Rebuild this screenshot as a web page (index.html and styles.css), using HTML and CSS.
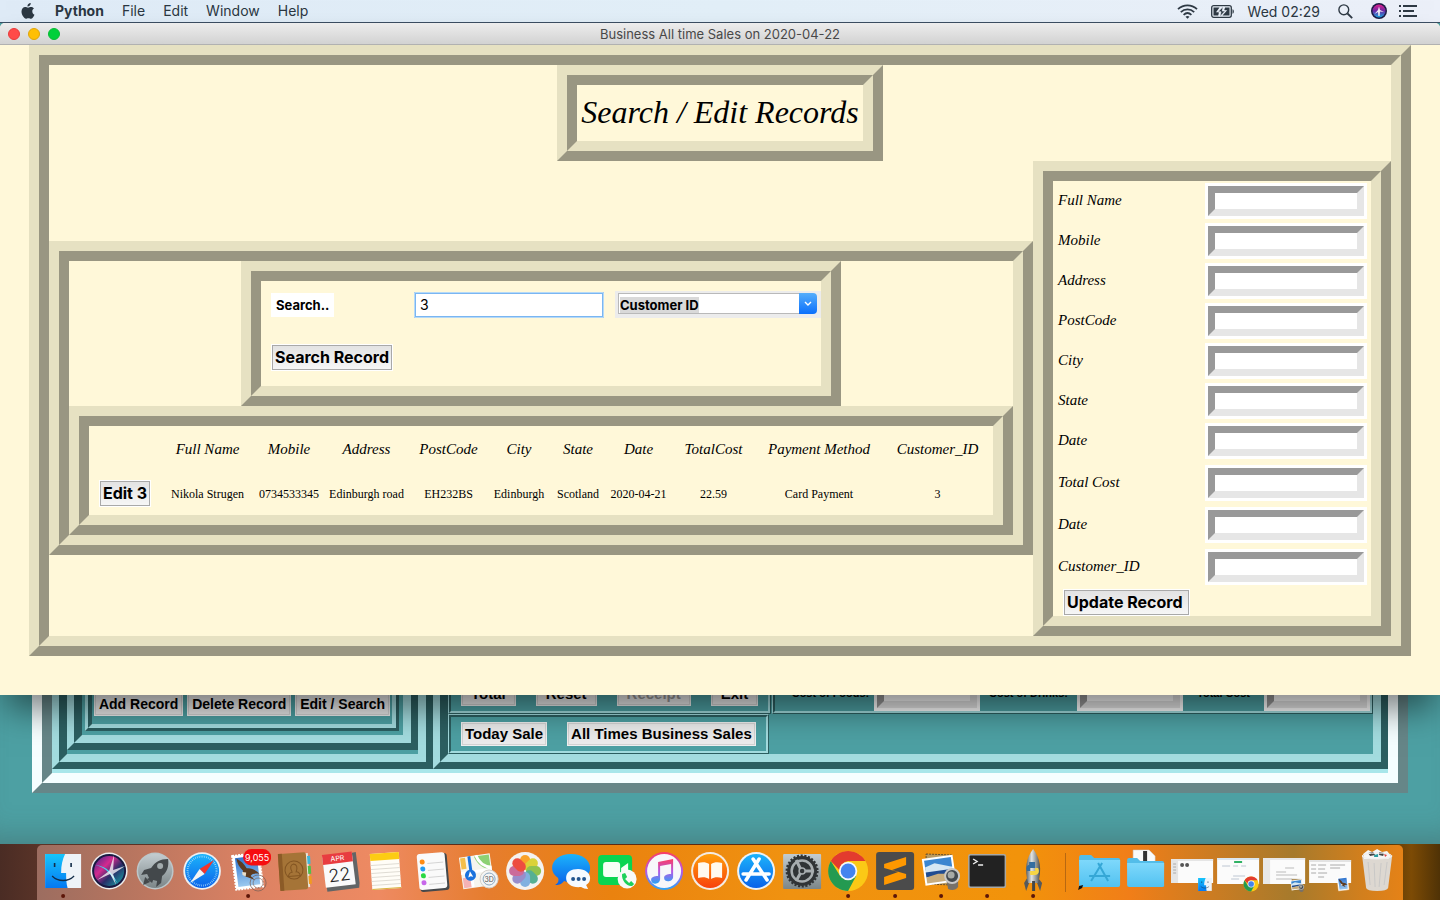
FILE: index.html
```html
<!DOCTYPE html>
<html lang="en">
<head>
<meta charset="utf-8">
<title>Business All time Sales on 2020-04-22</title>
<link rel="stylesheet" href="styles.css">
</head>
<body>
<div class="desktop">
  <header class="menubar">
    <nav class="menus">
      <button class="menu apple" aria-label="Apple"><svg width="14" height="16" viewBox="0 0 14 16"><path fill="#2b3742" d="M9.7 0c.1 1-.3 1.900-.9 2.600-.6.700-1.500 1.100-2.300 1-.1-1 .3-1.900.9-2.500C8 .4 8.900 0 9.700 0zM13 5.500c-1.200.8-1.800 1.700-1.700 3 0 1.500.9 2.700 2.200 3.200-.4 1.100-1 2.200-1.800 3.100-.5.600-1 1-1.700 1-.9 0-1.300-.5-2.600-.5s-1.700.5-2.500.5c-.8 0-1.300-.5-1.900-1.200C1.200 12.600.500 10.500.5 8.600c0-2.800 1.700-4.600 3.700-4.600 1.100 0 2 .7 2.900.7.700 0 1.700-.7 3.100-.7 1.200 0 2.200.6 2.800 1.500z"/></svg></button>
      <button class="menu strong">Python</button>
      <button class="menu">File</button>
      <button class="menu">Edit</button>
      <button class="menu">Window</button>
      <button class="menu">Help</button>
    </nav>
    <div class="status">
      <svg width="21" height="15" viewBox="0 0 21 15" fill="none" stroke="#2f3a45" stroke-width="1.800"><path d="M1 5.200c5.400-5 13.600-5 19 0M3.800 8.100c3.900-3.600 9.500-3.600 13.400 0M6.600 10.800c2.300-2.100 5.500-2.100 7.800 0"/><path d="M8.500 12.700c1.200-1 2.800-1 4 0l-2 2z" fill="#2f3a45" stroke="none"/></svg>
      <svg width="24" height="13" viewBox="0 0 24 13"><rect x=".7" y=".7" width="19.600" height="11.600" rx="2" fill="none" stroke="#2f3a45" stroke-width="1.300"/><path d="M21.500 4.200c1.800.5 1.800 4.100 0 4.600z" fill="#2f3a45"/><path d="M2.500 2.500h6L5 7.200h3l-.8 3.300H2.500zM18.500 2.500h-4.400l-.9 2.700h3l-4.700 5.300h7z" fill="#2f3a45"/><path d="M12.200 1.500 7 6.800h3l-1.200 4.900L14.300 6h-3z" fill="#2f3a45" stroke="#e8eef7" stroke-width=".7"/></svg>
      <span class="clock">Wed 02:29</span>
      <svg width="15" height="15" viewBox="0 0 15 15" fill="none" stroke="#2f3a45" stroke-width="1.400"><circle cx="5.800" cy="5.800" r="4.900"/><path d="m9.500 9.500 4.700 4.700" stroke-width="1.800"/></svg>
      <svg width="16" height="16" viewBox="0 0 16 16"><defs><linearGradient id="siri-bar" x1="0" y1="0" x2="0" y2="1"><stop offset="0" stop-color="#e0208e"/><stop offset=".5" stop-color="#6a2aa8"/><stop offset="1" stop-color="#18a8e0"/></linearGradient></defs><circle cx="8" cy="8" r="8" fill="#1c1b45"/><circle cx="8" cy="8" r="6.500" fill="url(#siri-bar)"/><path d="M8 3.500 9 7l4 2-4-.5-.4 4.500H7.400L7 9l-3.500 2L7 7z" fill="#fff" opacity=".9"/></svg>
      <svg width="18" height="12" viewBox="0 0 18 12" stroke="#2f3a45" stroke-width="2"><path d="M0 1h2M4 1h14M0 6h2M4 6h11M0 11h2M4 11h14"/></svg>
    </div>
  </header>

  <main class="stage">
    <section class="back-window" aria-label="Sales entry">
      <div class="bevel frame"><div class="bevel-in frame-in">
        <div class="bevel panel records"><div class="bevel-in panel-in">
          <div class="bevel panel"><div class="bevel-in panel-in">
            <div class="bevel record-box"><div class="bevel-in record-actions">
              <button class="classic small">Add Record</button>
              <button class="classic small">Delete Record</button>
              <button class="classic small">Edit / Search</button>
            </div></div>
          </div></div>
        </div></div>
        <div class="bevel panel totals"><div class="bevel-in totals-in">
          <div class="totals-row">
            <div class="bevel thin"><div class="bevel-in actions">
              <button class="classic wide">Total</button>
              <button class="classic wide">Reset</button>
              <button class="classic wide" disabled>Receipt</button>
              <button class="classic wide">Exit</button>
            </div></div>
            <div class="bevel thin costs"><div class="bevel-in costs-in">
              <label for="foods">Cost of Foods:</label><input id="foods" class="entry narrow">
              <label for="drinks">Cost of Drinks:</label><input id="drinks" class="entry narrow">
              <label for="total">Total Cost</label><input id="total" class="entry narrow">
            </div></div>
          </div>
          <div class="bevel thin sales"><div class="bevel-in actions">
            <button class="classic">Today Sale</button>
            <button class="classic">All Times Business Sales</button>
          </div></div>
        </div></div>
      </div></div>
    </section>

    <section class="window" aria-label="Business All time Sales">
      <div class="titlebar">
        <div class="lights">
          <button class="light close" aria-label="Close"></button>
          <button class="light minimize" aria-label="Minimize"></button>
          <button class="light zoom" aria-label="Zoom"></button>
        </div>
        <span class="window-title">Business All time Sales on 2020-04-22</span>
        <span></span>
      </div>
      <div class="window-body">
        <div class="bevel"><div class="bevel-in">
          <div class="bevel heading"><div class="bevel-in">
            <h1>Search / Edit Records</h1>
          </div></div>
          <div class="columns">
            <div class="bevel left"><div class="bevel-in">
              <div class="bevel search"><form class="bevel-in search-form">
                <label class="search-label" for="term">Search..</label>
                <input class="search-input" id="term" value="3">
                <div class="combo-bg"><div class="combo">
                  <select aria-label="Search by"><option>Customer ID</option></select>
                  <span class="combo-arrow"><svg width="8" height="6" viewBox="0 0 8 6" fill="none" stroke="#fff" stroke-width="1.400"><path d="m1 1 3 3 3-3"/></svg></span>
                </div></div>
                <button class="flat" type="button">Search Record</button>
              </form></div>
              <div class="bevel"><div class="bevel-in">
                <table>
                  <colgroup><col><col><col><col><col><col><col><col><col><col><col></colgroup>
                  <thead><tr><td></td><th>Full Name</th><th>Mobile</th><th>Address</th><th>PostCode</th><th>City</th><th>State</th><th>Date</th><th>TotalCost</th><th>Payment Method</th><th>Customer_ID</th></tr></thead>
                  <tbody><tr><td><button class="flat">Edit 3</button></td><td>Nikola Strugen</td><td>0734533345</td><td>Edinburgh road</td><td>EH232BS</td><td>Edinburgh</td><td>Scotland</td><td>2020-04-21</td><td>22.59</td><td>Card Payment</td><td>3</td></tr></tbody>
                </table>
              </div></div>
            </div></div>
            <div class="bevel right"><form class="bevel-in">
              <div class="field"><label for="f1">Full Name</label><input class="entry" id="f1"></div>
              <div class="field"><label for="f2">Mobile</label><input class="entry" id="f2"></div>
              <div class="field"><label for="f3">Address</label><input class="entry" id="f3"></div>
              <div class="field"><label for="f4">PostCode</label><input class="entry" id="f4"></div>
              <div class="field"><label for="f5">City</label><input class="entry" id="f5"></div>
              <div class="field"><label for="f6">State</label><input class="entry" id="f6"></div>
              <div class="field"><label for="f7">Date</label><input class="entry" id="f7"></div>
              <div class="field roomy"><label for="f8">Total Cost</label><input class="entry" id="f8"></div>
              <div class="field roomy"><label for="f9">Date</label><input class="entry" id="f9"></div>
              <div class="field roomy"><label for="f10">Customer_ID</label><input class="entry" id="f10"></div>
              <button class="flat update" type="button">Update Record</button>
            </form></div>
          </div>
        </div></div>
      </div>
    </section>
  </main>

  <footer class="shelf">
    <svg class="defs" width="0" height="0" aria-hidden="true"><defs>
      <linearGradient id="blue" x1="0" y1="0" x2="0" y2="1"><stop offset="0" stop-color="#1cb4fb"/><stop offset="1" stop-color="#0a62ea"/></linearGradient>
      <linearGradient id="face" x1="0" y1="0" x2="0" y2="1"><stop offset="0" stop-color="#16c5fc"/><stop offset="1" stop-color="#0478f2"/></linearGradient>
      <linearGradient id="steel" x1="0" y1="0" x2="0" y2="1"><stop offset="0" stop-color="#c3ccd0"/><stop offset="1" stop-color="#7c8688"/></linearGradient>
      <linearGradient id="orange" x1="0" y1="0" x2="0" y2="1"><stop offset="0" stop-color="#ff9f0a"/><stop offset="1" stop-color="#f8410c"/></linearGradient>
      <linearGradient id="note" x1="0" y1="0" x2="0" y2="1"><stop offset="0" stop-color="#fb3d62"/><stop offset=".5" stop-color="#b558e6"/><stop offset="1" stop-color="#29a5f7"/></linearGradient>
      <linearGradient id="siri" x1="0" y1="0" x2="1" y2="1"><stop offset="0" stop-color="#3b2a8c"/><stop offset=".35" stop-color="#d42a8f"/><stop offset=".6" stop-color="#2a2d68"/><stop offset="1" stop-color="#11b5b0"/></linearGradient>
      <linearGradient id="rocket" x1="0" y1="0" x2="1" y2="0"><stop offset="0" stop-color="#5b5f60"/><stop offset=".4" stop-color="#e2e4e2"/><stop offset="1" stop-color="#4a4e50"/></linearGradient>
      <linearGradient id="sky" x1="0" y1="0" x2="0" y2="1"><stop offset="0" stop-color="#2f74cf"/><stop offset="1" stop-color="#9cc9ef"/></linearGradient>
      <linearGradient id="folder" x1="0" y1="0" x2="0" y2="1"><stop offset="0" stop-color="#7ed8fb"/><stop offset="1" stop-color="#52c2f1"/></linearGradient>
      <g id="finder"><path fill="#eef3f8" d="M0 0h36v34H0z"/><path fill="url(#face)" d="M0 0h20c-2.500 5-4 11-4 19h5c0 6 .3 11 1.500 15H0z"/><path d="M7 22c6 6 16 6 22 0" fill="none" stroke="#122c48" stroke-width="1.300"/><path d="M9.500 9v4M26 9v4" stroke="#122c48" stroke-width="1.600"/></g>
      <g id="chrome"><circle r="20" fill="#fbc916"/><path fill="#249a51" d="M-17.300-10A20 20 0 0 0 0 20L8 5-8 5z"/><path fill="#e33b2e" d="M-17.300-10A20 20 0 0 1 17.300-10H0A10 10 0 0 0-8.700-1z"/><circle r="9.200" fill="#f4f7fb"/><circle r="7.400" fill="#4383ef"/></g>
      <g id="stamp"><path fill="#fff" stroke="#fff" stroke-width="2" stroke-dasharray="2 1" d="M0 0h27v34H0z"/><path fill="url(#sky)" d="M2.500 2.500h22v29h-22z"/><path fill="#5d3b20" d="M4 3c4 3 7 6 9 11 5 0 9 3 12 7-4-1-7-1-9 1l4 5-7-4c-3-1-5-3-4-7C6 12 4 8 4 3z"/><path fill="#e9dfcd" d="m8 17 4 1-1 4-3-2z"/></g>
      <g id="preview"><path fill="#b89a61" stroke="#694e28" stroke-width="1" stroke-dasharray="2 1" d="m5 0 26 1v30L5 30z"/><g transform="rotate(-8)"><path fill="#fff" d="M0 5h31v27H0z"/><path fill="#3b86d0" d="M2 7h27v10H2z"/><path fill="#d5e7f3" d="m2 14 10-3 17 6v3H2z"/><path fill="#204c91" d="M2 19h27v5H2z"/><path fill="#c8ad7e" d="m2 24 12-2 15 2v6H2z"/></g><path fill="#77716a" d="m25 24 2 11c4 2 8 1 10-2V24z"/><circle cx="31" cy="22" r="7" fill="#444a50" stroke="#c9c9c8" stroke-width="2"/><circle cx="30" cy="21" r="3.500" fill="#a7aaa6"/></g>
    </defs></svg>
    <nav class="dock" aria-label="Dock">
      <svg class="app" viewBox="0 0 46 55"><use href="#finder" x="5" y="9"/><circle class="dot" cx="23" cy="51" r="2"/></svg>
      <svg class="app" viewBox="0 0 46 55"><circle cx="23" cy="26" r="18.500" fill="#eee"/><circle cx="23" cy="26" r="17" fill="#191a42"/><circle cx="23" cy="26" r="15" fill="url(#siri)"/><path d="M9 20q9 1 14 6t9 13q-4-5-9-11T9 20z" fill="#44d9f2"/><path d="m23 26 5-16-1 15 12-4-12 8 3 11-6-11-13 6z" fill="#fff" opacity=".75"/></svg>
      <svg class="app" viewBox="0 0 46 55"><circle cx="23" cy="26" r="18.500" fill="#bcc6c9"/><circle cx="23" cy="26" r="17" fill="url(#steel)"/><path fill="#43484b" d="M36 14c-8 0-13 3-17 9l-7 2-3 5 6-1 2 4-2 1 5 4 1-3 4 1-1 6 5-4 1-7c5-4 7-10 6-17z"/><path fill="#43484b" d="m13 32-2 8 7-3z"/><circle cx="28" cy="21" r="3" fill="#a2abad"/></svg>
      <svg class="app" viewBox="0 0 46 55"><circle cx="23" cy="26" r="18.800" fill="#eef0f2"/><circle cx="23" cy="26" r="17" fill="url(#blue)"/><circle cx="23" cy="26" r="14.500" fill="none" stroke="#b4e3fa" stroke-width="2" stroke-dasharray=".6 1.300"/><path fill="#f3352b" d="m35 15-14.500 9 5 5z"/><path fill="#f4f5f4" d="m11 38 9.500-14 5 5z"/></svg>
      <svg class="app" viewBox="0 0 46 55"><use href="#stamp" transform="translate(7 11) rotate(-7)"/><circle cx="33" cy="38" r="8" fill="none" stroke="#765e55" stroke-width="1" opacity=".7"/><circle cx="33" cy="38" r="5" fill="none" stroke="#765e55" opacity=".6"/><rect x="18" y="4" width="28" height="16.500" rx="8.200" fill="#f60d10"/><text x="32" y="15.500" class="badge">9,055</text><circle class="dot" cx="23" cy="51" r="2"/></svg>
      <svg class="app" viewBox="0 0 46 55"><g transform="rotate(-4 23 27)"><path fill="#e7e4d8" d="M35 9h3v34H11z"/><path fill="#3fb6d8" d="M37 12h3v8h-3z"/><path fill="#52bd4a" d="M37 22h3v8h-3z"/><path fill="#f19b20" d="M37 32h3v8h-3z"/><rect x="8" y="8" width="28" height="37" rx="2" fill="#a57437"/><path fill="#8b5b27" d="M8 8h4v37H8z"/><circle cx="23" cy="25" r="9" fill="none" stroke="#835522"/><path d="M17 31q1-4 4-4-3-7 2-8 5 1 2 8 3 0 4 4z" fill="none" stroke="#835522"/></g></svg>
      <svg class="app" viewBox="0 0 46 55"><g transform="rotate(-7 23 27)"><path fill="#626566" d="M7 12 8 45h32l1-5V9z"/><path fill="#fafafa" d="M7 9h30v32H7z"/><path fill="#e83c40" d="M7 8h30v10H7z"/><text x="22" y="15.500" class="cal-month">APR</text><text x="22" y="36" class="cal-day">22</text></g></svg>
      <svg class="app" viewBox="0 0 46 55"><g transform="rotate(-4 23 27)"><path fill="#fffdf7" d="M8 8h29v36H8z"/><path fill="#fccc13" d="M8 8h29v7H8z"/><path d="M8 19.500h29M8 23.500h29M8 27.500h29M8 31.500h29M8 35.500h29M8 39.500h29" stroke="#d8d5cc" stroke-width=".8"/><path d="M8 43.500h29" stroke="#d9b23d"/></g></svg>
      <svg class="app" viewBox="0 0 46 55"><g transform="rotate(-5 23 27)"><rect x="9" y="9" width="29" height="37" rx="3" fill="#45494c"/><rect x="8" y="8" width="28" height="36" rx="3" fill="#fafafa"/><circle cx="13" cy="16" r="2.500" fill="#ff8b12"/><circle cx="13" cy="23" r="2.500" fill="#229cf3"/><circle cx="13" cy="30" r="2.500" fill="#29d943"/><circle cx="13" cy="37" r="2.500" fill="#c767ea"/><path d="M18 18h16M18 25h16M18 32h16M18 39h16" stroke="#ccc" stroke-width=".8"/></g></svg>
      <svg class="app" viewBox="0 0 46 55"><g transform="rotate(-8 23 27)"><path fill="#f6f5ee" d="M5 10h31v32H5z"/><path fill="#8dd174" d="M20 11h15v15C28 25 22 19 20 11z"/><path fill="#f5bf4a" d="M6 11h5v11H6z"/><path fill="#f5b2b4" d="M6 31h9v10H6z"/><path d="M15 10v31M5 26h31M22 10q3 12 14 14" fill="none" stroke="#fff" stroke-width="3"/><path d="M15 10v17" stroke="#1b73dd" stroke-width="3"/><circle cx="14" cy="29" r="5.500" fill="#1b73dd"/><path fill="#fff" d="m14 25 2.500 6-2.500-1-2.500 1z"/></g><circle cx="33" cy="34" r="9" fill="#f4f4f3" stroke="#d4d0ca"/><circle cx="33" cy="34" r="6" fill="none" stroke="#8aa7c0"/><text x="33" y="37" class="three-d">3D</text></svg>
      <svg class="app" viewBox="0 0 46 55"><circle cx="23" cy="26" r="19" fill="#f4f2f0"/><g transform="translate(23 26)" opacity=".9"><rect x="-5" y="-16" width="10" height="15" rx="5" fill="#fb9a13"/><rect x="-5" y="-16" width="10" height="15" rx="5" fill="#d8cf25" transform="rotate(45)"/><rect x="-5" y="-16" width="10" height="15" rx="5" fill="#87bd3d" transform="rotate(90)"/><rect x="-5" y="-16" width="10" height="15" rx="5" fill="#46a98a" transform="rotate(135)"/><rect x="-5" y="-16" width="10" height="15" rx="5" fill="#74a9df" transform="rotate(180)"/><rect x="-5" y="-16" width="10" height="15" rx="5" fill="#8f83c8" transform="rotate(225)"/><rect x="-5" y="-16" width="10" height="15" rx="5" fill="#c75d91" transform="rotate(270)"/><rect x="-5" y="-16" width="10" height="15" rx="5" fill="#ed3c2d" transform="rotate(315)"/></g></svg>
      <svg class="app" viewBox="0 0 46 55"><path fill="url(#blue)" d="M23 9c11 0 19 6 19 14s-8 14-19 14c-3 0-5 0-7-1-3 4-6 4-9 4 3-2 4-4 3-7-4-3-6-6-6-10C4 15 12 9 23 9z"/><path fill="#f6faff" d="M30 24c7 0 12 4 12 9 0 3-1 5-4 7l2 4c-3 0-5-1-7-2-9 1-15-3-15-9s5-9 12-9z"/><circle cx="25" cy="34" r="2" fill="#23558f"/><circle cx="30.500" cy="34" r="2" fill="#23558f"/><circle cx="36" cy="34" r="2" fill="#23558f"/></svg>
      <svg class="app" viewBox="0 0 46 55"><rect x="4" y="10" width="34" height="30" rx="4" fill="#09d551"/><rect x="9" y="17" width="17" height="15" rx="3" fill="#f5fff6"/><path fill="#f5fff6" d="m27 23 7-5v14l-7-5z"/><circle cx="33" cy="34" r="9.500" fill="#f8f9f8"/><path fill="#1ed05b" d="m28 29 3-1 2 4-2 2 4 4 2-2 3 3-2 2c-5 1-11-6-10-12z"/></svg>
      <svg class="app" viewBox="0 0 46 55"><circle cx="23" cy="26" r="19" fill="url(#note)"/><circle cx="23" cy="26" r="17" fill="#f7f7fa"/><path fill="url(#note)" d="M17 17 32 14v18c0 5-9 6-9 1 0-3 3-4 7-4V19l-11 2v13c0 6-9 6-9 1 0-3 3-4 7-4z"/></svg>
      <svg class="app" viewBox="0 0 46 55"><circle cx="23" cy="26" r="19" fill="#f4ece4"/><circle cx="23" cy="26" r="17" fill="url(#orange)"/><path fill="#fff9ef" d="M22 19c-3-2-7-2-11-1v15c4-1 8-1 11 1zM24 19c3-2 7-2 11-1v15c-4-1-8-1-11 1z"/></svg>
      <svg class="app" viewBox="0 0 46 55"><circle cx="23" cy="26" r="19" fill="#edf2f6"/><circle cx="23" cy="26" r="17" fill="url(#blue)"/><path d="m20 14 14 21M26 14 13 35M10 29h26" stroke="#fff" stroke-width="3.500" stroke-linecap="round"/></svg>
      <svg class="app" viewBox="0 0 46 55"><rect x="4" y="9" width="38" height="35" rx="1" fill="url(#steel)"/><circle cx="23" cy="26" r="15" fill="#303436"/><circle cx="23" cy="26" r="14.500" fill="none" stroke="#303436" stroke-width="4" stroke-dasharray="2 1.500"/><circle cx="23" cy="26" r="10.500" fill="none" stroke="#a7adaf" stroke-width="2.500"/><path d="M24 26h11M22 25l-5-10M22 27l-5 9" stroke="#a7adaf" stroke-width="3"/><circle cx="23" cy="26" r="3" fill="#303436" stroke="#a7adaf" stroke-width="1.500"/></svg>
      <svg class="app" viewBox="0 0 46 55"><use href="#chrome" x="23" y="26"/><circle class="dot" cx="23" cy="51" r="2"/></svg>
      <svg class="app" viewBox="0 0 46 55"><rect x="4" y="7" width="38" height="38" rx="3" fill="#4b4b4b"/><path fill="#ff9800" d="m12 19 22-7v8l-14 5 14 4v4l-22 7v-8l14-5-14-4z"/><circle class="dot" cx="23" cy="51" r="2"/></svg>
      <svg class="app" viewBox="0 0 46 55"><use href="#preview" x="3" y="9"/><circle class="dot" cx="23" cy="51" r="2"/></svg>
      <svg class="app" viewBox="0 0 46 55"><rect x="4" y="9" width="38" height="34" rx="2" fill="#a8a8a4"/><rect x="5.500" y="10.500" width="35" height="31" rx="1" fill="#222"/><path d="m9 14 4 2.500-4 2.500M14 20h5" fill="none" stroke="#eee" stroke-width="1.400"/><circle class="dot" cx="23" cy="51" r="2"/></svg>
      <svg class="app" viewBox="0 0 46 55"><path fill="#55595b" d="m17 33-3 5 2 8 3-8h8l3 8 2-8-4-5z"/><path fill="url(#rocket)" d="M23 4c7 9 9 20 5 34H18C14 24 16 13 23 4z"/><path fill="#356d9f" d="M19 17h6v6h-5v3h-3c-1-4 0-6 2-6z"/><path fill="#f7d544" d="M28 23c2 4 0 7-3 7h-5v-4h5v-3z"/><path fill="#42474a" d="M22 36h3v10h-3z"/><circle class="dot" cx="23" cy="51" r="2"/></svg>
      <span class="divider"></span>
      <svg class="app" viewBox="0 0 46 55"><path fill="#53bde9" d="M3 12q0-2 2-2h10l3 3h24q2 0 2 2v6H3z"/><path fill="url(#folder)" d="M3 15h41v25q0 2-2 2H5q-2 0-2-2z"/><path d="m22 18 10 18M26 18 15 36M13 31h21" stroke="#35a7d6" stroke-width="2"/><path fill="#111" d="m2 45 1-4 4-1-1 3z"/></svg>
      <svg class="app" viewBox="0 0 46 55"><path fill="#fafafa" stroke="#ccc" stroke-width=".5" d="M10 5h16l6 6v12H10z"/><path fill="#333" d="M20 6h4v12h-4z"/><path fill="#53bde9" d="M4 15q0-2 2-2h8l3 3h22q2 0 2 2v6H4z"/><path fill="url(#folder)" d="M4 18h37v23q0 1-2 1H6q-2 0-2-2z"/></svg>
      <svg class="app" viewBox="0 0 46 55"><path fill="#fbfbfb" d="M2 14h42v24H2z"/><path fill="#e5e5e5" d="M2 14h42v2H2zM2 16h7v22H2z"/><path d="M4 19h3M4 22h3M4 25h3M4 28h3" stroke="#aaa"/><circle cx="13" cy="20" r="2" fill="#555"/><circle cx="18" cy="20" r="2" fill="#555"/><use href="#finder" transform="translate(29 33) scale(.38)"/></svg>
      <svg class="app" viewBox="0 0 46 55"><path fill="#fbfbfb" d="M2 13h42v26H2z"/><path fill="#dce7ef" d="M2 13h42v2H2z"/><path fill="#31b265" d="M19 16h8v2h-8z"/><path d="M7 21h8M18 21h5M26 21h5M18 31h12M16 34h8" stroke="#bdc6d2"/><use href="#chrome" transform="translate(36 39) scale(.38)"/></svg>
      <svg class="app" viewBox="0 0 46 55"><path fill="#fbfbfb" d="M2 13h42v26H2z"/><path fill="#e8e8e8" d="M2 13h42v2H2zM2 15h7v24H2z"/><path d="M24 23h9M15 27h10M15 30h21M15 34h16" stroke="#bbb"/><use href="#preview" transform="translate(29 34) scale(.36)"/></svg>
      <svg class="app" viewBox="0 0 46 55"><path fill="#fbfbfb" d="M2 15h42v23H2z"/><path fill="#e3e3e3" d="M2 15h42v2H2z"/><path d="M4 20h5M4 24h5M4 28h5M11 20h8M11 24h7M11 28h9M11 32h6M23 20h15M23 23h10" stroke="#aaa"/><use href="#stamp" transform="translate(30 33) rotate(-7) scale(.38)"/></svg>
      <svg class="app" viewBox="0 0 46 55"><path fill="#ddd" opacity=".94" d="M8 11h30l-4 32q-1 3-11 3t-11-3z"/><path fill="#f6f6f6" d="m9 9 5-4 4 2 5-3 5 3 5-1 4 5-3 3H10z"/><path fill="#444" d="m14 8 5-1 2 3-5 1zM25 7l5 1-1 3-4-1z"/><path fill="#2b9da2" d="m20 10 4-1v3h-4z"/><path fill="#d44" d="m30 9 3 1-2 2z"/><ellipse cx="23" cy="11" rx="15" ry="3" fill="none" stroke="#eee"/><path d="m14 17 2 23M20 18l1 24M27 18l-2 24M33 17l-3 23" stroke="#c4c4c4" stroke-width=".8"/></svg>
    </nav>
  </footer>
</div>
</body>
</html>
```
FILE: styles.css
```css
* { box-sizing: border-box; }

body { margin: 0; font-family: Inter, "Liberation Sans", sans-serif; color: #000; }
button, input, select { font: inherit; color: inherit; margin: 0; }

.desktop { min-height: 100vh; display: grid; grid-template-rows: auto 1fr auto; }

/* menu bar */
.menubar { height: 23px; padding: 0 23px 0 21px; display: flex; align-items: center; justify-content: space-between; background: linear-gradient(90deg, #dfebf7, #e2eff8 50%, #ecf0f9); border-bottom: 1px solid #3c4f63; font-size: 14px; color: #2b3742; }
.menus { display: flex; align-items: center; gap: 18px; }
.menu { border: 0; padding: 0; background: none; line-height: 22px; }
.menu svg, .status svg { display: block; }
.apple { margin-right: 2px; }
.strong { font-weight: 700; }
.status { display: flex; align-items: center; gap: 13px; }
.status > :nth-child(n+4) { margin-left: 5px; }
.status > :last-child { margin-left: -1px; }

/* windows share one grid cell, the front one on top */
.stage { display: grid; background: #4da0a3; }
.back-window, .window { grid-area: 1 / 1; }

/* two-step bevels */
.bevel { --out: 10px; --in: 10px; --hi: #e6e1c2; --lo: #999682; border: var(--out) solid; border-color: var(--hi) var(--lo) var(--lo) var(--hi); }
.bevel-in { height: 100%; border: var(--in) solid; border-color: var(--lo) var(--hi) var(--hi) var(--lo); }

/* front window */
.window { align-self: start; position: relative; background: #fff8d9; border-radius: 5px 5px 0 0; box-shadow: 0 20px 32px -6px rgba(0, 0, 0, .5); }
.titlebar { height: 22px; padding: 0 8px; display: grid; grid-template-columns: 1fr auto 1fr; align-items: center; border-radius: 5px 5px 0 0; border-bottom: 1px solid #b1b1b1; background: linear-gradient(#ededed, #d2d2d2); }
.lights { display: flex; gap: 8px; }
.light { width: 12px; height: 12px; padding: 0; border-radius: 50%; border: 1px solid; }
.close { background: #ff4a48; border-color: #e93a3a; }
.minimize { background: #ffbf05; border-color: #e0a50a; }
.zoom { background: #00d03a; border-color: #0abb34; }
.window-title { font-size: 13px; color: #484848; }
.window-body { padding: 0 29px 39px; }

.heading { width: fit-content; margin: 0 auto; }
h1 { margin: 0; padding: 0 4px 2px; font: italic 400 32px/54px "Apple Chancery", "Z003", "URW Chancery L", "Liberation Serif", serif; white-space: nowrap; }

.columns { display: flex; align-items: center; }
.left { flex: 1; margin-bottom: 1px; }
.right { width: 358px; }

.search { width: fit-content; margin: 0 auto; }
.search-form { display: grid; grid-template-columns: 133px 191px 206px; column-gap: 10px; row-gap: 26px; align-items: center; justify-items: start; padding: 10px 0 15px 10px; }
.search-label { padding: 0 5px; background: #fff; font-size: 13px; font-weight: 700; line-height: 24px; }
.search-input { width: 190px; height: 26px; padding: 0 4px; border: 2px solid #7ab6f2; outline: 1px solid #b5d9f7; outline-offset: -1px; background: #fff; font-size: 14px; border-radius: 1px; }
.combo-bg { width: 100%; padding: 2px 4px 4px 3px; background: #ececec; }
.combo { display: flex; height: 21px; }
.combo select { flex: 1; min-width: 0; appearance: none; border: 1px solid #b9b9b9; border-right: 0; border-radius: 0; padding: 2px 0 0 1px; background: linear-gradient(#d9d9d9, #d9d9d9) 1px 3px / 79px 17px no-repeat #fff; font-size: 13px; font-weight: 700; line-height: 16px; }
.combo-arrow { width: 18px; display: grid; place-items: center; border-radius: 0 4px 4px 0; background: linear-gradient(#55aefb, #0a6ffc); }

.flat { height: 25px; margin: 1px; padding: 0 2px; border: 1px solid #a9a9a9; box-shadow: 0 0 0 1px #fff; background: linear-gradient(#e3e3e3, #f6f6f6); font-size: 16px; font-weight: 700; line-height: 23px; white-space: nowrap; }

table { width: 100%; table-layout: fixed; border-collapse: collapse; }
col:nth-child(1) { width: 72px; }
col:nth-child(2) { width: 93px; }
col:nth-child(3) { width: 70px; }
col:nth-child(4) { width: 85px; }
col:nth-child(5) { width: 79px; }
col:nth-child(6) { width: 62px; }
col:nth-child(7) { width: 56px; }
col:nth-child(8) { width: 65px; }
col:nth-child(9) { width: 85px; }
col:nth-child(10) { width: 126px; }
th, .field label { font: italic 400 15px/20px "Apple Chancery", "Z003", "URW Chancery L", "Liberation Serif", serif; }
th, td { padding: 0; text-align: center; white-space: nowrap; }
thead tr { height: 46px; }
tbody tr { height: 43px; }
td { font: 12px/16px "Liberation Serif", serif; }
td .flat { font: 700 16px/23px Inter, sans-serif; }

.field { display: flex; justify-content: space-between; align-items: center; padding: 2px 4px 2px 5px; }
.field label { padding-bottom: 2px; }
.field.roomy { padding-top: 4px; }
.entry { width: 156px; height: 30px; margin: 3px; padding: 0; border: 7px solid; border-color: #999 #e6e6e6 #e6e6e6 #999; background: #fff; box-shadow: 0 0 0 3px #fff; }
.update { display: block; margin: 3px 0 1px 11px; padding-right: 6px; }

/* back window */
.back-window { display: flex; min-width: 0; padding: 0 32px 51px; box-shadow: inset 0 -30px 30px -24px rgba(60, 80, 80, .4); }
.frame { --hi: #f5feff; --lo: #668688; flex: 1; }
.frame-in { display: flex; padding-bottom: 4px; background: #a8e6ea; }
.panel, .record-box, .thin { --out: 7px; --in: 8px; --hi: #a3dcdf; --lo: #2c5f61; background: #4da0a3; }
.records { width: 381px; }
.panel-in { display: flex; padding-bottom: 4px; }
.panel-in > .panel { flex: 1; min-width: 0; }
.record-box { --out: 3px; --in: 4px; flex: 1; min-width: 0; margin: 0 4px 0 3px; }
.record-actions { display: flex; align-items: flex-end; gap: 4px; padding: 0 2px 8px; }
.totals { flex: 1; }
.totals-in { display: flex; flex-direction: column; justify-content: flex-end; }
.totals-row { display: flex; align-items: stretch; gap: 1px; }
.thin { --out: 1px; --in: 2px; }
.actions { display: flex; align-items: flex-end; gap: 20px; padding: 5px 10px; }
.sales { width: fit-content; }
.costs { flex: 1; }
.costs-in { display: grid; grid-template-columns: 87px 106px 97px 106px 81px 106px; justify-content: end; align-items: center; font: 700 11px/16px "Liberation Sans", sans-serif; }
.costs-in label { justify-self: center; }
.entry.narrow { width: 100px; }
.classic { height: 24px; padding: 0 3px; border: 1px solid #f0f0f0; box-shadow: inset 0 0 0 1px #d4d4d4; background: #ececec; font: 700 15px/20px "Liberation Sans", sans-serif; white-space: nowrap; }
.classic:disabled { color: #999; }
.classic.wide { padding: 0 9px; }
.classic.small { flex: 1 0 auto; font-size: 14px; }

/* dock */
.shelf { padding: 1px 37px 0; background: linear-gradient(90deg, #4a2c24, #5b3428 3%, #5e2a10 50%, #3a2808 95%, #7d4b05 98%, #4f3206); }
.defs { display: block; }
.dock { display: flex; height: 55px; padding: 0 3px; border-radius: 5px 5px 0 0; background: linear-gradient(90deg, #9c6d60, #b4745f 6%, #dd8263 16%, #ee8a62 25%, #e67d2e 33%, #ea820f 42%, #f09210 55%, #f2930a 72%, #f17e18 80%, #a67a2c 92%, #d27f1d 97%, #e58217); }
.app { flex: 1; min-width: 0; height: 55px; }
.dot { fill: #5c1508; }
.divider { width: 20px; margin: 8px 0; background: linear-gradient(#b86811, #b86811) 9px 0 / 1px 100% no-repeat; }
.badge { font: 9px Inter, sans-serif; fill: #fff; text-anchor: middle; }
.cal-month { font: 7px Inter, sans-serif; fill: #fff; text-anchor: middle; }
.cal-day { font: 300 18px Inter, sans-serif; fill: #222; text-anchor: middle; }
.three-d { font: 7px Inter, sans-serif; fill: #555; text-anchor: middle; }
```
